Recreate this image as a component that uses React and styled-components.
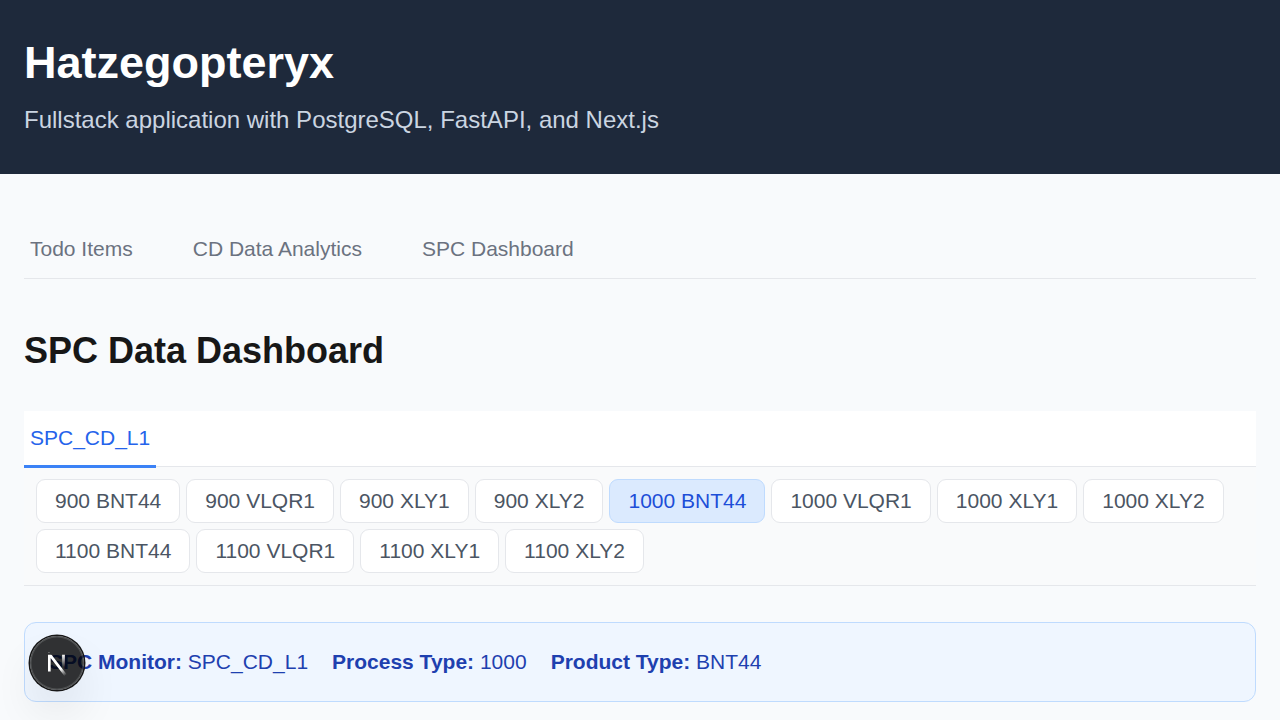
import React from "react";
import styled, { createGlobalStyle } from "styled-components";

const GlobalStyle = createGlobalStyle`
  *, *::before, *::after { box-sizing: border-box; }
  html { font-size: 24px; }
  body {
    margin: 0;
    height: 100vh;
    overflow: hidden;
    background: #f8fafc;
    color: #171717;
    font-family: "Liberation Sans", Arial, Helvetica, sans-serif;
    line-height: 1.5;
  }
`;

const Page = styled.div`
  min-height: 100vh;
  background: #f8fafc;
`;

const Header = styled.header`
  padding: 36px 24px;
  background: #1e293b;
`;

const Title = styled.h1`
  margin: 0 0 12px;
  font-size: 45px;
  line-height: 54px;
  font-weight: 700;
  color: #fff;
`;

const Subtitle = styled.p`
  margin: 0;
  font-size: 24px;
  line-height: 36px;
  color: #cbd5e1;
`;

const Main = styled.main`
  padding: 48px 24px 0;
`;

const Nav = styled.nav`
  display: flex;
  gap: 48px;
  margin-bottom: 48px;
  border-bottom: 1px solid #e5e7eb;
`;

const NavTab = styled.button`
  padding: 12px 6px;
  border: 0;
  border-bottom: 2px solid transparent;
  background: none;
  font: 500 21px/30px "Liberation Sans", Arial, sans-serif;
  color: #6b7280;
`;

const Heading = styled.h2`
  margin: 0 0 36px;
  font-size: 36px;
  line-height: 48px;
  font-weight: 700;
`;

const MonitorTabs = styled.div`
  display: flex;
  background: #fff;
  border-bottom: 1px solid #e5e7eb;
`;

const MonitorTab = styled(NavTab)`
  margin-bottom: -2px;
  border-bottom: 3px solid #3b82f6;
  color: #2563eb;
`;

const PillList = styled.div`
  display: flex;
  flex-wrap: wrap;
  gap: 6px;
  margin-bottom: 36px;
  padding: 12px;
  border-bottom: 1px solid #e5e7eb;
  background: #f9fafb;
`;

const Pill = styled.button`
  padding: 6px 18px;
  border: 1px solid ${(p) => (p.$active ? "#bfdbfe" : "#e5e7eb")};
  border-radius: 9px;
  background: ${(p) => (p.$active ? "#dbeafe" : "#fff")};
  color: ${(p) => (p.$active ? "#1d4ed8" : "#4b5563")};
  font: 500 21px/30px "Liberation Sans", Arial, sans-serif;
`;

const InfoBox = styled.div`
  display: flex;
  gap: 24px;
  padding: 24px;
  border: 1px solid #bfdbfe;
  border-radius: 12px;
  background: #eff6ff;
  font-size: 21px;
  line-height: 30px;
  color: #1e40af;
`;

const DevBadge = styled.div`
  position: fixed;
  left: 30px;
  bottom: 30px;
  width: 54px;
  height: 54px;
  border-radius: 50%;
  background: rgba(0, 0, 0, 0.8);
  box-shadow: 0 0 0 1.5px #171717, inset 0 0 0 1.5px rgba(255, 255, 255, 0.14),
    0 24px 48px -12px rgba(0, 0, 0, 0.24);

  svg {
    display: block;
    margin: -3px;
  }
`;

const NAV = ["Todo Items", "CD Data Analytics", "SPC Dashboard"];
const PROCESSES = ["900", "1000", "1100"];
const PRODUCTS = ["BNT44", "VLQR1", "XLY1", "XLY2"];
const COMBINATIONS = PROCESSES.flatMap((process) =>
  PRODUCTS.map((product) => ({ process, product }))
);
const INFO = [
  ["SPC Monitor:", "SPC_CD_L1"],
  ["Process Type:", "1000"],
  ["Product Type:", "BNT44"],
];

function NextMark() {
  return (
    <svg width="60" height="60" viewBox="0 0 40 40" fill="none">
      <g transform="translate(12.5 13)">
        <path d="M13.3 15.2 L2.34 1 V12.6" stroke="url(#diag)" strokeWidth="1.86" mask="url(#notch)" />
        <path d="M11.825 1.5 V13.1" stroke="url(#stem)" strokeWidth="1.86" />
      </g>
      <defs>
        <linearGradient id="diag" x1="9.95555" y1="11.1226" x2="15.4778" y2="17.9671" gradientUnits="userSpaceOnUse">
          <stop stopColor="white" />
          <stop offset="0.604072" stopColor="white" stopOpacity="0" />
          <stop offset="1" stopColor="white" stopOpacity="0" />
        </linearGradient>
        <linearGradient id="stem" x1="11.8222" y1="1.40039" x2="11.791" y2="9.62542" gradientUnits="userSpaceOnUse">
          <stop stopColor="white" />
          <stop offset="1" stopColor="white" stopOpacity="0" />
        </linearGradient>
        <mask id="notch">
          <rect width="100%" height="100%" fill="white" />
          <rect width="5" height="1.5" fill="black" />
        </mask>
      </defs>
    </svg>
  );
}

export default function App() {
  return (
    <Page>
      <GlobalStyle />
      <Header>
        <Title>Hatzegopteryx</Title>
        <Subtitle>Fullstack application with PostgreSQL, FastAPI, and Next.js</Subtitle>
      </Header>
      <Main>
        <Nav>
          {NAV.map((n) => (
            <NavTab key={n}>{n}</NavTab>
          ))}
        </Nav>
        <Heading>SPC Data Dashboard</Heading>
        <MonitorTabs>
          <MonitorTab>SPC_CD_L1</MonitorTab>
        </MonitorTabs>
        <PillList>
          {COMBINATIONS.map(({ process, product }) => (
            <Pill
              key={process + product}
              $active={process === "1000" && product === "BNT44"}
            >
              {process} {product}
            </Pill>
          ))}
        </PillList>
        <InfoBox>
          {INFO.map(([label, value]) => (
            <span key={label}>
              <strong>{label}</strong> {value}
            </span>
          ))}
        </InfoBox>
      </Main>
      <DevBadge>
        <NextMark />
      </DevBadge>
    </Page>
  );
}
